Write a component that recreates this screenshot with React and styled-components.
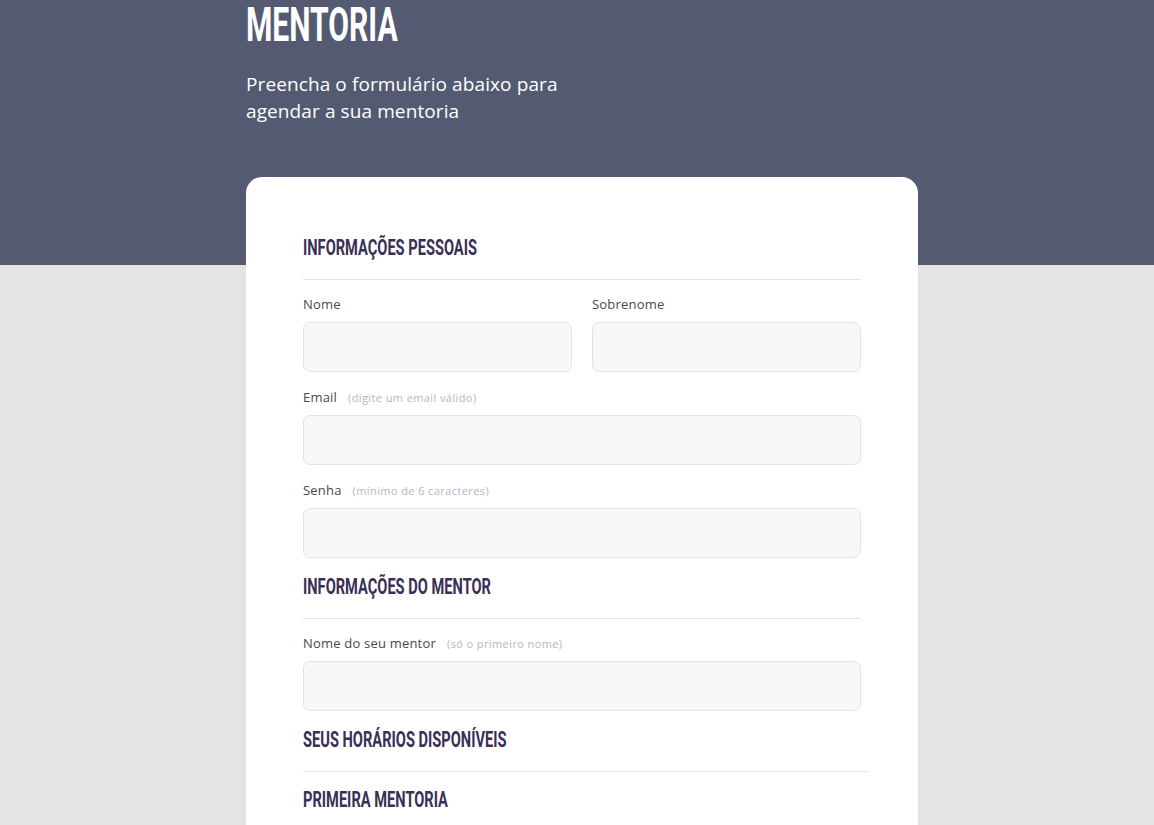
import styled, { createGlobalStyle } from 'styled-components';

const GlobalStyle = createGlobalStyle`
  * { box-sizing: border-box; }
  html, body {
    margin: 0;
    padding: 0;
  }
  body {
    font-family: 'Open Sans', 'Noto Sans', sans-serif;
    background: linear-gradient(#545a72 0, #545a72 265px, #e4e4e4 265px);
    min-height: 825px;
  }
`;

const Page = styled.div`
  width: 672px;
  margin: 0 236px 0 246px;
`;

const Hero = styled.header`
  padding-top: 2px;
  height: 177px;
  color: #ffffff;
`;

const Title = styled.h1`
  margin: 0;
  display: inline-block;
  font-family: Roboto, 'Liberation Sans', sans-serif;
  font-weight: 700;
  font-size: 48px;
  line-height: 46px;
  transform: scaleX(0.627);
  transform-origin: left center;
`;

const Subtitle = styled.p`
  margin: 23px 0 0;
  width: 340px;
  font-size: 19px;
  line-height: 27px;
  letter-spacing: 0.1px;
  font-weight: 400;
`;

const Card = styled.section`
  background: #ffffff;
  border-radius: 16px 16px 0 0;
  padding: 59px 57px 20px;
  min-height: 648px;
`;

const SectionTitle = styled.h2`
  margin: 0;
  display: block;
  font-family: Roboto, 'Liberation Sans', sans-serif;
  font-weight: 700;
  font-size: 22px;
  line-height: 24px;
  color: #3a2f55;
  white-space: nowrap;
  transform: scaleX(0.665);
  transform-origin: left center;
`;

const Divider = styled.hr`
  border: 0;
  border-top: 1px solid #e4e2ec;
  margin: 19px ${p => (p.$wide ? '-7px' : '0')} 16px 0;
`;

const Row = styled.div`
  display: grid;
  grid-template-columns: ${p => (p.$split ? '1fr 1fr' : '1fr')};
  gap: 20px;
  margin-bottom: 17px;
`;

const Field = styled.label`
  display: flex;
  flex-direction: column;
`;

const LabelLine = styled.span`
  display: flex;
  align-items: baseline;
  gap: 11px;
  height: 16px;
  font-size: 13px;
  line-height: 16px;
  letter-spacing: 0.2px;
  color: #4a4856;
  margin-bottom: 10px;
`;

const Hint = styled.span`
  font-size: 11px;
  letter-spacing: 0.4px;
  color: #b9b3c7;
`;

const Input = styled.input`
  height: 50px;
  width: 100%;
  background: #f8f8fb;
  border: 1px solid #e3e2ea;
  border-radius: 7px;
  font: inherit;
  padding: 0 14px;
  outline: none;
`;

const App = () => (
  <>
    <GlobalStyle />
    <Page>
      <Hero>
        <Title>MENTORIA</Title>
        <Subtitle>Preencha o formulário abaixo para agendar a sua mentoria</Subtitle>
      </Hero>
      <Card>
        <SectionTitle>INFORMAÇÕES PESSOAIS</SectionTitle>
        <Divider />
        <Row $split>
          <Field>
            <LabelLine>Nome</LabelLine>
            <Input type="text" />
          </Field>
          <Field>
            <LabelLine>Sobrenome</LabelLine>
            <Input type="text" />
          </Field>
        </Row>
        <Row>
          <Field>
            <LabelLine>
              Email <Hint>(digite um email válido)</Hint>
            </LabelLine>
            <Input type="email" />
          </Field>
        </Row>
        <Row>
          <Field>
            <LabelLine>
              Senha <Hint>(mínimo de 6 caracteres)</Hint>
            </LabelLine>
            <Input type="password" />
          </Field>
        </Row>
        <SectionTitle>INFORMAÇÕES DO MENTOR</SectionTitle>
        <Divider />
        <Row>
          <Field>
            <LabelLine>
              Nome do seu mentor <Hint>(só o primeiro nome)</Hint>
            </LabelLine>
            <Input type="text" />
          </Field>
        </Row>
        <SectionTitle>SEUS HORÁRIOS DISPONÍVEIS</SectionTitle>
        <Divider $wide />
        <SectionTitle>PRIMEIRA MENTORIA</SectionTitle>
      </Card>
    </Page>
  </>
);

export default App;
